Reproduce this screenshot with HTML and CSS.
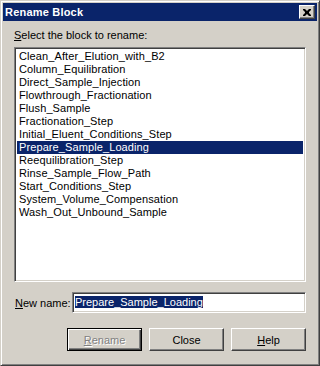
FILE: index.html
```html
<!DOCTYPE html>
<html>

<head>
  <meta charset="UTF-8">
  <link rel="stylesheet" href="styles.css">
  <title>Rename Block</title>
</head>

<body>
<div class="window">
  <div class="titlebar">
    <span class="title">Rename Block</span>
    <button class="close-button">
      <svg width="8" height="7" viewBox="0 0 8 7">
        <path d="M0 0h2l2 2 2-2h2v1l-2 2v1l2 2v1h-2l-2-2-2 2h-2v-1l2-2v-1l-2-2z" fill="#000"/>
      </svg>
    </button>
  </div>

  <div class="content">
    <div class="label"><u>S</u>elect the block to rename:</div>
    <div class="listbox">
      <div class="item">Clean_After_Elution_with_B2</div>
      <div class="item">Column_Equilibration</div>
      <div class="item">Direct_Sample_Injection</div>
      <div class="item">Flowthrough_Fractionation</div>
      <div class="item">Flush_Sample</div>
      <div class="item">Fractionation_Step</div>
      <div class="item">Initial_Eluent_Conditions_Step</div>
      <div class="item selected">Prepare_Sample_Loading</div>
      <div class="item">Reequilibration_Step</div>
      <div class="item">Rinse_Sample_Flow_Path</div>
      <div class="item">Start_Conditions_Step</div>
      <div class="item">System_Volume_Compensation</div>
      <div class="item">Wash_Out_Unbound_Sample</div>
    </div>

    <div class="name-row">
      <span class="name-label"><u>N</u>ew name:</span>
      <div class="textbox"><span class="sel-text">Prepare_Sample_Loading</span></div>
    </div>

    <div class="buttons">
      <div class="btn default disabled"><span><u>R</u>ename</span></div>
      <div class="btn">Close</div>
      <div class="btn"><span><u>H</u>elp</span></div>
    </div>
  </div>
</div>
</body>
</html>
```

FILE: styles.css
```css
body {
    margin: 0;
    padding: 0;
    background: #d4d0c8;
    font-family: 'Liberation Sans', Arial, sans-serif;
    font-size: 11px;
    color: #000;
}

.window {
    width: 320px;
    height: 366px;
    box-sizing: border-box;
    background: #d4d0c8;
    border-top: 1px solid #d4d0c8;
    border-left: 1px solid #d4d0c8;
    border-right: 1px solid #404040;
    border-bottom: 1px solid #404040;
    box-shadow: inset 1px 1px 0 #fff, inset -1px -1px 0 #808080;
    padding: 2px;
    display: flex;
    flex-direction: column;
}

.titlebar {
    height: 18px;
    background: #0a246a;
    display: flex;
    align-items: center;
    justify-content: space-between;
    padding: 0 2px 0 2px;
}

.title {
    color: white;
    font-weight: bold;
    font-size: 11px;
    letter-spacing: 0.2px;
}

.close-button {
    width: 16px;
    height: 14px;
    padding: 0;
    margin: 0;
    background: #d4d0c8;
    border-top: 1px solid #fff;
    border-left: 1px solid #fff;
    border-right: 1px solid #404040;
    border-bottom: 1px solid #404040;
    box-shadow: inset -1px -1px 0 #808080;
    display: flex;
    align-items: center;
    justify-content: center;
}

.content {
    padding: 8px 11px 0 11px;
    display: flex;
    flex-direction: column;
}

.label {
    height: 13px;
    line-height: 13px;
    margin-bottom: 5px;
}

.listbox {
    height: 235px;
    box-sizing: border-box;
    background: white;
    border-top: 1px solid #808080;
    border-left: 1px solid #808080;
    border-right: 1px solid #fff;
    border-bottom: 1px solid #fff;
    box-shadow: inset 1px 1px 0 #404040, inset -1px -1px 0 #d4d0c8;
    padding: 2px 2px;
}

.item {
    height: 13px;
    line-height: 13px;
    padding-left: 2px;
    white-space: nowrap;
    overflow: hidden;
    letter-spacing: 0.1px;
}

.item.selected {
    background: #0a246a;
    color: white;
}

.name-row {
    display: flex;
    align-items: center;
    margin-top: 10px;
    gap: 4px;
}

.name-label {
    width: 53px;
    padding-left: 1px;
    white-space: nowrap;
}

.textbox {
    flex: 1;
    height: 21px;
    box-sizing: border-box;
    background: white;
    border-top: 1px solid #808080;
    border-left: 1px solid #808080;
    border-right: 1px solid #fff;
    border-bottom: 1px solid #fff;
    box-shadow: inset 1px 1px 0 #404040, inset -1px -1px 0 #d4d0c8;
    padding: 3px 2px 0 2px;
    line-height: 13px;
    white-space: nowrap;
}

.sel-text {
    background: #0a246a;
    color: white;
}

.buttons {
    display: flex;
    justify-content: flex-end;
    gap: 7px;
    margin-top: 15px;
}

.btn {
    width: 75px;
    height: 23px;
    box-sizing: border-box;
    border-top: 1px solid #fff;
    border-left: 1px solid #fff;
    border-right: 1px solid #404040;
    border-bottom: 1px solid #404040;
    box-shadow: inset -1px -1px 0 #808080;
    display: flex;
    align-items: center;
    justify-content: center;
}

.btn.default {
    border: 1px solid #000;
    box-shadow: inset 1px 1px 0 #fff, inset -1px -1px 0 #404040, inset -2px -2px 0 #808080;
}

.btn.disabled {
    color: #808080;
    text-shadow: 1px 1px 0 #fff;
}
```
